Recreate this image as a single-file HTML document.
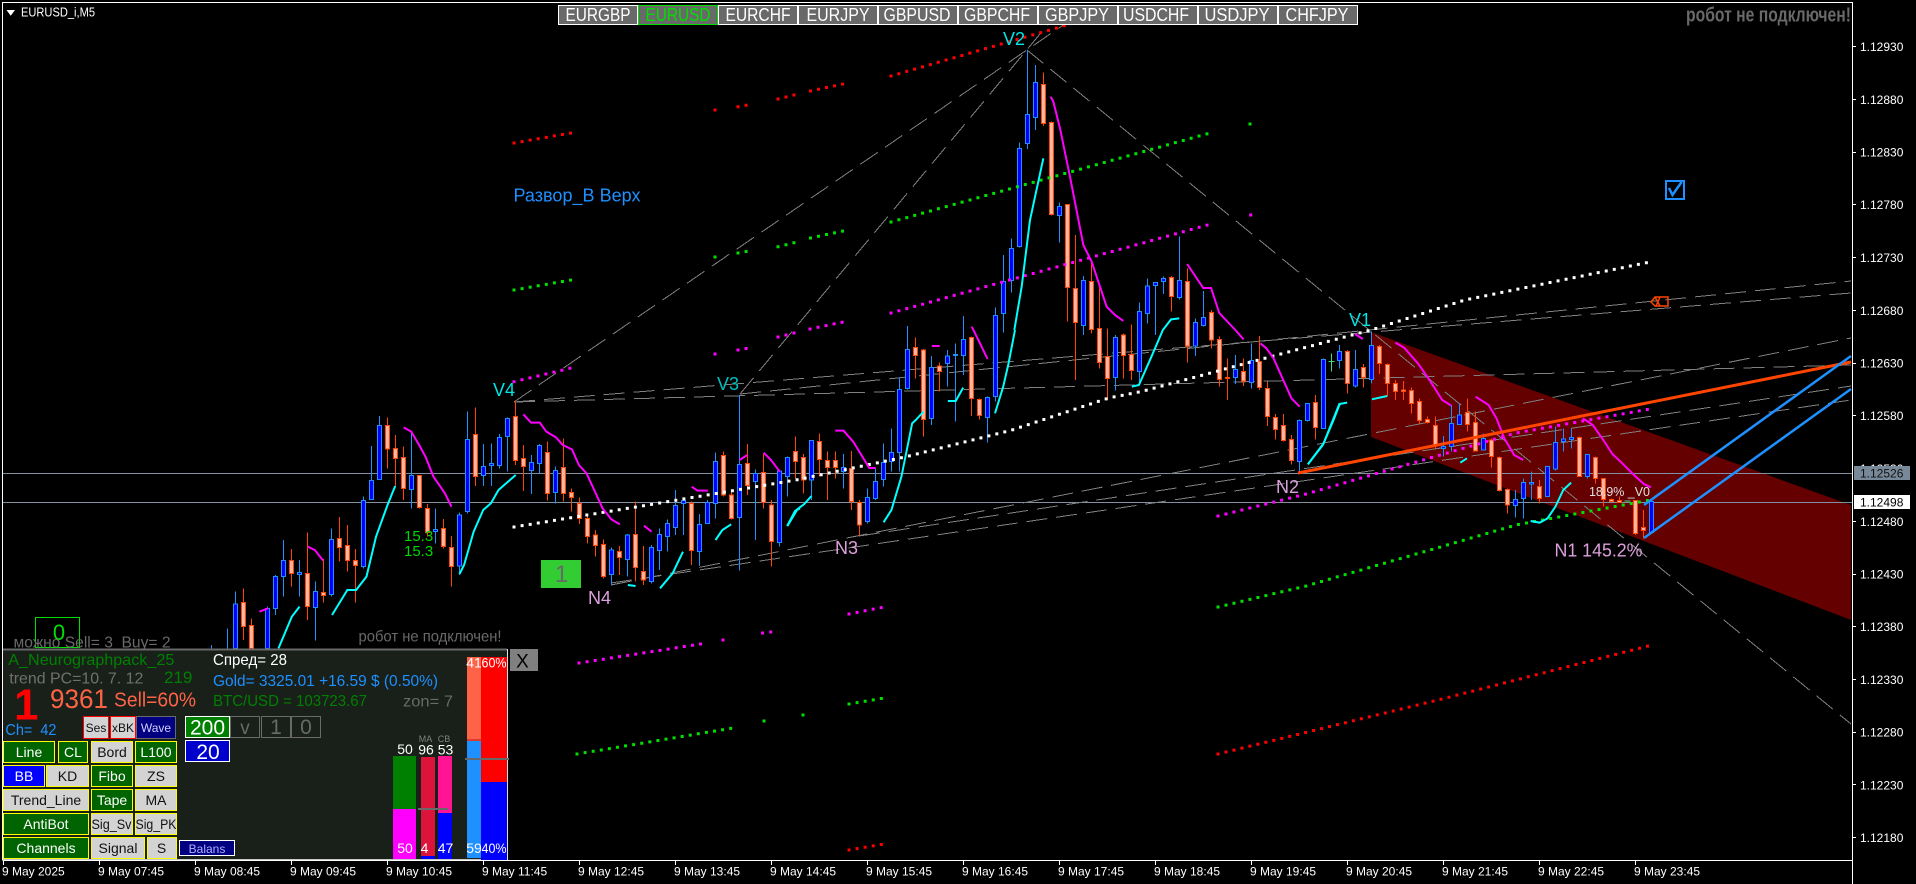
<!DOCTYPE html>
<html lang="ru"><head><meta charset="utf-8"><title>EURUSD_i,M5</title>
<style>
html,body{margin:0;padding:0;background:#000;width:1916px;height:884px;overflow:hidden}
svg{display:block;font-family:"Liberation Sans",sans-serif}
svg *{vector-effect:non-scaling-stroke}
text{white-space:pre}
.c{shape-rendering:crispEdges;stroke-width:1}
.bw{stroke:#1E90FF;fill:none}.rw{stroke:#FF4500;fill:none}
.bb{stroke:#1E90FF;fill:#0000FF}.rb{stroke:#FF4500;fill:#FFB4A2}
.g{stroke:#808080;stroke-width:1;stroke-dasharray:21 9;fill:none;shape-rendering:crispEdges}
.d{fill:none;stroke-width:3;stroke-linecap:square;stroke-dasharray:0 8.2}
.m{fill:none;stroke:#FF00FF;stroke-width:2}
.y{fill:none;stroke:#00FFFF;stroke-width:2}
.p text{font-size:12px;fill:#fff}
.t text{font-size:12px;fill:#fff}
.tb rect{stroke:#fff;fill:#696969;shape-rendering:crispEdges}
.tb text{font-size:18px;fill:#fff;text-anchor:middle}
.btn rect{stroke:#FFFF00;shape-rendering:crispEdges}
.gr{fill:#006400}.gy{fill:#D3D3D3}
.btn text{font-size:14px;text-anchor:middle}
.wt{fill:#fff}.bk{fill:#111}
.bar text{font-size:14px;fill:#fff;text-anchor:middle}
</style></head><body>
<svg width="1916" height="884" viewBox="0 0 1916 884" xmlns="http://www.w3.org/2000/svg">
<rect width="1916" height="884" fill="#000"/>

<polygon points="1371,332 1851,505 1851,620 1371,437" fill="#640000"/>

<g stroke="#8090A0" stroke-width="1" shape-rendering="crispEdges">
<line x1="3" y1="473.5" x2="1852" y2="473.5"/>
<line x1="3" y1="502.5" x2="1852" y2="502.5"/>
</g>

<g>
<path class="g" d="M514 402L1072 19"/>
<path class="g" d="M740 394L1060 10"/>
<path class="g" d="M1027 50L1851 724"/>
<path class="g" d="M514 402L1851 293"/>
<path class="g" d="M514 402L1851 365"/>
<path class="g" d="M740 394L1851 281"/>
<path class="g" d="M611 585L1851 338"/>
<path class="g" d="M859 536L1851 386"/>
<path class="g" d="M611 583L1851 400"/>
</g>

<!-- candles section A -->
<g class="c" transform="translate(.5,380) scale(1,.33333)">
<path class="bw" d="M211 795V805M227 745V805M235 635V805M267 680V805M275 585V705M283 480V650M299 540V650M315 605V782M331 445V650M363 350V565M371 198V360M379 108V300M411 155V385M435 385V490M459 398V585M467 95V400M483 192V318M491 190V318M499 162V265M507 112V275M531 225V342M539 192V282M555 260V370M611 502V615M627 462V590M651 495V610M659 445V570M667 418V515M675 330V465M683 355V465M699 402V558M707 360V430M715 218V415M739 45V572M755 268V480M779 270V500"/>
<path class="rw" d="M243 625V780M251 715V805M291 507V620M307 457V720M323 537V668M339 411V545M347 435V575M355 507V668M387 112V265M395 165V320M403 200V360M419 285V385M427 372V470M443 417V505M451 468V620M475 82V318M515 62V255M523 195V333M547 185V362M563 175V365M571 325V395M579 352V432M587 405V490M595 450V530M603 478V595M619 498V585M635 365V605M643 498V615M691 365V555M723 215V350M731 335V418M747 192V345M763 220V385M771 360V560"/>
<path class="bb" d="M233 672h4V805h-4zM265 685h4V805h-4zM273 590h4V685h-4zM281 541h4V590h-4zM297 577h4V583h-4zM313 635h4V682h-4zM329 478h4V643h-4zM361 362h4V560h-4zM369 302h4V358h-4zM377 137h4V298h-4zM409 287h4V328h-4zM433 449h4V455h-4zM457 405h4V558h-4zM465 178h4V395h-4zM481 260h4V287h-4zM489 250h4V257h-4zM497 172h4V257h-4zM505 115h4V170h-4zM529 248h4V272h-4zM537 196h4V250h-4zM553 272h4V338h-4zM609 510h4V583h-4zM625 465h4V538h-4zM649 503h4V605h-4zM657 463h4V512h-4zM665 430h4V470h-4zM673 377h4V443h-4zM681 362h4V370h-4zM697 433h4V515h-4zM705 367h4V430h-4zM713 244h4V370h-4zM737 253h4V413h-4zM753 280h4V305h-4zM777 273h4V487h-4z"/>
<path class="rb" d="M241 667h4V740h-4zM249 737h4V805h-4zM289 541h4V580h-4zM305 580h4V680h-4zM321 637h4V647h-4zM337 475h4V502h-4zM345 497h4V542h-4zM353 541h4V556h-4zM385 137h4V207h-4zM393 205h4V235h-4zM401 232h4V325h-4zM417 287h4V383h-4zM425 385h4V458h-4zM441 445h4V500h-4zM449 503h4V560h-4zM473 163h4V290h-4zM513 110h4V242h-4zM521 236h4V260h-4zM545 217h4V340h-4zM561 262h4V340h-4zM569 337h4V352h-4zM577 370h4V415h-4zM585 415h4V470h-4zM593 465h4V497h-4zM601 493h4V590h-4zM617 515h4V532h-4zM633 463h4V562h-4zM641 575h4V600h-4zM689 370h4V512h-4zM721 226h4V345h-4zM729 345h4V415h-4zM745 250h4V317h-4zM761 277h4V367h-4zM769 375h4V485h-4z"/>
</g>

<!-- candles section B -->
<g class="c" transform="translate(.5,280) scale(1,.33333)">
<path class="bw" d="M787 530V650M811 480V660M843 522V625M867 625V730M875 565V660M883 490V620M891 445V575M899 292V575M907 138V328M931 228V435M947 210V320M955 190V425M963 108V285M987 350V488M995 82V365M1003 -75V158M1011 -125V38M1019 -413V-98M1027 -690V-393M1035 -645V-450M1059 -233V-112M1083 -12V165M1115 165V332M1139 68V310M1147 -5V130M1155 7V165M1163 -10V42M1179 -130V58M1195 115V228M1203 33V140M1235 225V312M1251 190V325M1299 418V580M1307 370V425"/>
<path class="rw" d="M795 470V595M803 522V640M819 460V590M827 515V660M835 515V595M851 513V690M859 660V768M915 172V295M923 207V470M939 247V335M971 170V408M979 355V418M1043 -622V-462M1051 -475V-193M1067 -227V125M1075 -135V300M1091 -55V160M1099 15V265M1107 145V360M1123 160V295M1131 133V300M1171 -12V95M1187 -35V248M1211 90V205M1219 170V320M1227 235V360M1243 235V318M1259 168V330M1267 305V438M1275 402V478M1283 402V485M1291 465V553M1315 345V478"/>
<path class="bb" d="M785 532h4V590h-4zM809 482h4V600h-4zM841 562h4V575h-4zM865 652h4V725h-4zM873 605h4V655h-4zM881 547h4V598h-4zM889 517h4V545h-4zM897 328h4V518h-4zM905 208h4V325h-4zM929 262h4V415h-4zM945 228h4V250h-4zM953 224h4V227h-4zM961 178h4V227h-4zM985 352h4V412h-4zM993 107h4V350h-4zM1001 5h4V100h-4zM1009 -95h4V2h-4zM1017 -395h4V-100h-4zM1025 -497h4V-409h-4zM1033 -593h4V-487h-4zM1057 -221h4V-193h-4zM1081 1h4V137h-4zM1113 172h4V293h-4zM1137 95h4V275h-4zM1145 18h4V100h-4zM1153 7h4V17h-4zM1161 -5h4V5h-4zM1177 1h4V53h-4zM1193 127h4V198h-4zM1201 112h4V137h-4zM1233 268h4V293h-4zM1249 242h4V307h-4zM1297 422h4V545h-4zM1305 370h4V422h-4z"/>
<path class="rb" d="M793 515h4V545h-4zM801 532h4V600h-4zM817 484h4V538h-4zM825 541h4V562h-4zM833 541h4V562h-4zM849 565h4V665h-4zM857 667h4V735h-4zM913 202h4V227h-4zM921 210h4V418h-4zM937 258h4V275h-4zM969 172h4V355h-4zM977 358h4V406h-4zM1041 -587h4V-469h-4zM1049 -473h4V-197h-4zM1065 -227h4V23h-4zM1073 25h4V128h-4zM1089 4h4V148h-4zM1097 145h4V248h-4zM1105 230h4V295h-4zM1121 165h4V227h-4zM1129 224h4V272h-4zM1169 -8h4V50h-4zM1185 5h4V198h-4zM1209 97h4V180h-4zM1217 178h4V298h-4zM1225 292h4V296h-4zM1241 275h4V303h-4zM1257 245h4V323h-4zM1265 325h4V410h-4zM1273 412h4V448h-4zM1281 437h4V482h-4zM1289 478h4V542h-4zM1313 367h4V443h-4z"/>
</g>

<!-- candles section D -->
<g class="c" transform="translate(.5,300) scale(1,.33333)">
<path class="bw" d="M1323 175V385M1339 135V205M1355 150V262M1371 95V250M1443 408V470M1451 315V455M1459 310V375M1483 400V450M1515 570V653M1523 535V655M1531 515V600M1547 500V590M1555 380V512M1563 385V455M1571 385V445M1587 463V535M1651 600V700"/>
<path class="rw" d="M1347 150V280M1363 192V262M1379 135V222M1387 190V288M1395 240V300M1403 243V300M1411 263V340M1419 295V372M1427 350V370M1435 350V445M1467 295V395M1475 335V455M1491 415V503M1499 470V575M1507 565V640M1539 540V610M1579 410V530M1595 470V550M1603 535V620M1611 595V605M1619 590V607M1635 600V705M1643 630V715"/>
<path fill="none" stroke="#3CE07A" d="M1331 160V215M1328 185H1334M1624 603H1630"/>
<path class="bb" d="M1321 178h4V385h-4zM1337 155h4V182h-4zM1353 208h4V258h-4zM1369 137h4V238h-4zM1441 440h4V445h-4zM1449 370h4V440h-4zM1457 345h4V373h-4zM1481 415h4V450h-4zM1513 598h4V617h-4zM1521 547h4V595h-4zM1529 547h4V552h-4zM1545 500h4V590h-4zM1553 427h4V507h-4zM1561 417h4V425h-4zM1569 412h4V418h-4zM1585 463h4V530h-4zM1649 605h4V697h-4z"/>
<path class="rb" d="M1345 155h4V250h-4zM1361 202h4V232h-4zM1377 140h4V190h-4zM1385 193h4V250h-4zM1393 250h4V275h-4zM1401 270h4V275h-4zM1409 272h4V310h-4zM1417 305h4V362h-4zM1425 358h4V367h-4zM1433 377h4V435h-4zM1465 338h4V373h-4zM1473 367h4V453h-4zM1489 420h4V470h-4zM1497 472h4V572h-4zM1505 568h4V615h-4zM1537 560h4V595h-4zM1577 412h4V530h-4zM1593 472h4V535h-4zM1601 535h4V598h-4zM1609 598h4V605h-4zM1617 601h4V607h-4zM1633 602h4V700h-4zM1641 682h4V692h-4z"/>
</g>

<!-- dotted levels -->
<g stroke="#FF0000" class="d">
<path d="M514 143L571 133"/><path d="M715 110L716 110"/><path d="M738 106.7L754 103.7"/><path d="M778 99L794 95"/><path d="M810.5 91L843 84"/><path d="M891 76L1067 25"/>
<path d="M849 850L884 844"/><path d="M1218 754L1442 699L1652 645"/>
</g>
<g stroke="#00E000" class="d">
<path d="M514 290L571 280"/><path d="M715 257L716 257"/><path d="M738 253L754 250"/><path d="M778 246.7L794 242.7"/><path d="M810.5 238L843 231"/><path d="M891 222L1210 133"/><path d="M1250 124L1251 124"/>
<path d="M577 754L733 728"/><path d="M764 721L765 721"/><path d="M803 715L804 715"/><path d="M849 704L884 698"/>
<path d="M1218 607L1306 586L1516 525L1650 500"/>
</g>
<g stroke="#FF00FF" class="d">
<path d="M514 381.7L571 368"/><path d="M715 354L716 354"/><path d="M738 350L754 347"/><path d="M778 337L794 333"/><path d="M810 329L843 322"/><path d="M891 313L1211 224"/><path d="M1250.7 215L1251.7 215"/>
<path d="M579 663L707 643"/><path d="M723 640L731 639"/><path d="M762.6 633L771 632"/><path d="M849 614L884 607"/>
<path d="M1218 516L1306 494L1516 433L1650 409"/>
</g>
<path stroke="#FFFFFF" class="d" d="M514 527L636 507L796 480L905 457L1012 430L1108.6 398L1140.7 391.7L1258.6 360L1337 339L1371 330L1465 300L1650 262"/>

<!-- magenta / cyan segments -->
<g transform="translate(200,380) scale(.3827,.33333)">
<polyline class="m" points="155,695 178,685"/>
<polyline class="m" points="282,500 300,510 322,542"/>
<polyline class="m" points="532,142 552,155 575,200 590,232 610,290 622,310 640,340 657,380"/>
<polyline class="m" points="845,103 865,128 888,128 905,155 930,172 948,195 972,208 990,255 1010,280 1030,330 1052,385 1075,418 1097,433"/>
<polyline class="m" points="1160,437 1180,455"/>
<polyline class="m" points="1285,320 1300,332 1327,332"/>
<polyline class="m" points="1410,240 1430,225"/>
<polyline class="m" points="1473,218 1492,240 1515,275"/>
<polyline class="y" points="205,805 240,710 260,680"/>
<polyline class="y" points="345,705 385,630 408,630 435,590 460,470 490,375 510,318"/>
<polyline class="y" points="678,582 690,555 715,455 740,390 760,370 780,330 825,285"/>
<polyline class="y" points="1118,615 1138,618"/>
<polyline class="y" points="1202,625 1235,580 1262,515"/>
<polyline class="y" points="1347,480 1365,450 1388,433"/>
<polyline class="y" points="1535,438 1560,390 1568,385"/>
</g>
<g transform="translate(780,280) scale(.35714,.33333)">
<polyline class="m" points="155,452 178,452 205,485 242,550 250,564 268,564"/>
<polyline class="m" points="425,198 447,198"/>
<polyline class="m" points="537,140 560,190 581,237"/>
<polyline class="m" points="1140,-48 1185,24 1207,24 1230,99 1275,150 1298,178"/>
<polyline class="m" points="1345,190 1362,205 1382,235 1432,355 1455,380"/>
<polyline class="y" points="20,738 42,693 68,672 88,648"/>
<polyline class="y" points="290,727 312,690 340,590 370,430 380,420 402,395"/>
<polyline class="y" points="470,363 492,363 513,323"/>
<polyline class="y" points="602,400 625,320 640,250 658,150"/>
<polyline class="y" points="985,320 1005,315 1040,230 1072,150 1095,118 1118,115"/>
<polyline class="y" points="1478,553 1520,495 1550,420 1568,370"/>
</g>
<g transform="translate(960,30) scale(.33333,.33333)">
<polyline class="m" points="272,200 280,215 300,295 330,440 370,645 395,695 440,830 465,855 490,873"/>
<polyline class="y" points="163,900 185,770 210,570 250,385"/>
</g>
<g transform="translate(1300,300) scale(.39293,.33333)">
<polyline class="m" points="140,102 160,117"/>
<polyline class="m" points="243,128 265,143 300,190 325,232 362,300 385,317"/>
<polyline class="m" points="447,290 480,315 500,355 520,415 545,465 568,480"/>
<polyline class="m" points="720,355 745,375 772,420 795,462 820,490 850,525 875,552 893,562"/>
<polyline class="y" points="20,493 60,430 100,312 120,308"/>
<polyline class="y" points="183,298 222,288"/>
<polyline class="y" points="408,488 425,475"/>
<polyline class="y" points="587,663 610,668 630,655 650,620 670,570 690,548"/>
</g>

<!-- trend lines -->
<line x1="1298" y1="473" x2="1851" y2="362" stroke="#FF4500" stroke-width="3"/>
<line x1="1644" y1="505" x2="1851" y2="356" stroke="#1E90FF" stroke-width="2.5"/>
<line x1="1644" y1="538" x2="1851" y2="389" stroke="#1E90FF" stroke-width="2.5"/>

<!-- small objects -->
<path d="M1651 302L1655 297H1668V306H1655Z M1655 297L1660 306 M1660 297L1656 306" fill="none" stroke="#FF4500" stroke-width="1.5"/>
<rect x="1666" y="181" width="18" height="18" fill="none" stroke="#1E90FF" stroke-width="2"/>
<path d="M1669 188L1672.5 195L1681.6 182" fill="none" stroke="#1E90FF" stroke-width="2.5"/>
<rect x="541" y="560" width="40" height="28" fill="#32CD32"/>
<text x="561.5" y="582" font-size="24" fill="#696969" text-anchor="middle">1</text>

<!-- chart labels -->
<g font-size="18" fill="#00E5E5">
<text x="1003" y="45">V2</text><text x="1349" y="326">V1</text><text x="493" y="396">V4</text><text x="717" y="390" fill="#00BFC0">V3</text>
</g>
<g font-size="18" fill="#DDA0DD">
<text x="588" y="604">N4</text><text x="835" y="554">N3</text><text x="1276" y="493">N2</text><text x="1554.5" y="556.5" textLength="88" lengthAdjust="spacingAndGlyphs">N1 145.2%</text>
</g>
<text x="1589" y="496" font-size="13" fill="#E0E0E0" textLength="61" lengthAdjust="spacingAndGlyphs">18.9% _V0</text>
<text x="404" y="541" font-size="15" fill="#00D800">15.3</text>
<text x="404" y="556" font-size="15" fill="#00D800">15.3</text>
<text x="513.5" y="201.7" font-size="18" fill="#1E90FF" textLength="127" lengthAdjust="spacingAndGlyphs">Развор_В Верх</text>

<rect x="35.5" y="617.5" width="44" height="30" fill="none" stroke="#00E000" shape-rendering="crispEdges"/>
<text x="59" y="640" font-size="22" fill="#00E000" text-anchor="middle">0</text>
<text x="13.5" y="647.5" font-size="16" fill="#696969" textLength="157" lengthAdjust="spacingAndGlyphs">можно Sell= 3  Buy= 2</text>
<text x="358.5" y="641.5" font-size="16" fill="#696969" textLength="143" lengthAdjust="spacingAndGlyphs">робот не подключен!</text>

<!-- top strip -->
<text x="1686" y="21.5" font-size="20" font-weight="bold" fill="#696969" textLength="165" lengthAdjust="spacingAndGlyphs">робот не подключен!</text>
<path d="M6.5 10H15L10.7 15.7Z" fill="#fff"/>
<text x="21" y="16.7" font-size="13" fill="#fff" textLength="74" lengthAdjust="spacingAndGlyphs">EURUSD_i,M5</text>
<g class="tb">
<rect x="558.5" y="5.5" width="79" height="19"/><text x="598" y="21" textLength="65" lengthAdjust="spacingAndGlyphs">EURGBP</text>
<rect x="638.5" y="5.5" width="79" height="19" style="stroke:#00E000"/><text x="678" y="21" textLength="65" lengthAdjust="spacingAndGlyphs" style="fill:#00E000">EURUSD</text>
<rect x="718.5" y="5.5" width="79" height="19"/><text x="758" y="21" textLength="65" lengthAdjust="spacingAndGlyphs">EURCHF</text>
<rect x="798.5" y="5.5" width="79" height="19"/><text x="838" y="21" textLength="63" lengthAdjust="spacingAndGlyphs">EURJPY</text>
<rect x="878.5" y="5.5" width="79" height="19"/><text x="917" y="21" textLength="67" lengthAdjust="spacingAndGlyphs">GBPUSD</text>
<rect x="958.5" y="5.5" width="79" height="19"/><text x="997" y="21" textLength="66" lengthAdjust="spacingAndGlyphs">GBPCHF</text>
<rect x="1038.5" y="5.5" width="79" height="19"/><text x="1077" y="21" textLength="64" lengthAdjust="spacingAndGlyphs">GBPJPY</text>
<rect x="1118.5" y="5.5" width="79" height="19"/><text x="1156" y="21" textLength="66" lengthAdjust="spacingAndGlyphs">USDCHF</text>
<rect x="1198.5" y="5.5" width="79" height="19"/><text x="1237" y="21" textLength="65" lengthAdjust="spacingAndGlyphs">USDJPY</text>
<rect x="1278.5" y="5.5" width="79" height="19"/><text x="1317" y="21" textLength="63" lengthAdjust="spacingAndGlyphs">CHFJPY</text>
</g>

<!-- frame -->
<g stroke="#fff" shape-rendering="crispEdges" fill="none">
<path d="M2.5 860V2.5H1852.5V884"/>
<path d="M2.5 860.5H1852.5"/>
<path d="M3.5 861V865M99.5 861V865M195.5 861V865M291.5 861V865M387.5 861V865M483.5 861V865M579.5 861V865M675.5 861V865M771.5 861V865M867.5 861V865M963.5 861V865M1059.5 861V865M1155.5 861V865M1251.5 861V865M1347.5 861V865M1443.5 861V865M1539.5 861V865M1635.5 861V865"/>
<path d="M1853 46.5h3M1853 99.5h3M1853 152.5h3M1853 204.5h3M1853 257.5h3M1853 310.5h3M1853 363.5h3M1853 415.5h3M1853 521.5h3M1853 574.5h3M1853 626.5h3M1853 679.5h3M1853 732.5h3M1853 784.5h3M1853 837.5h3"/>
</g>

<!-- price axis -->
<g class="p">
<text x="1860" y="51">1.12930</text><text x="1860" y="104">1.12880</text><text x="1860" y="156.500">1.12830</text><text x="1860" y="209">1.12780</text><text x="1860" y="262">1.12730</text><text x="1860" y="315">1.12680</text><text x="1860" y="367.500">1.12630</text><text x="1860" y="420">1.12580</text><text x="1860" y="473">1.12530</text><text x="1860" y="526">1.12480</text><text x="1860" y="578.500">1.12430</text><text x="1860" y="631">1.12380</text><text x="1860" y="684">1.12330</text><text x="1860" y="736.500">1.12280</text><text x="1860" y="789.500">1.12230</text><text x="1860" y="842">1.12180</text>
</g>
<rect x="1854" y="466" width="56" height="14" fill="#778899"/>
<text x="1860" y="477.500" font-size="12" fill="#111">1.12526</text>
<rect x="1854" y="495" width="56" height="14" fill="#fff"/>
<text x="1860" y="506.500" font-size="12" fill="#000">1.12498</text>

<!-- time axis -->
<g class="t">
<text x="2" y="875.500">9 May 2025</text><text x="98" y="875.500">9 May 07:45</text><text x="194" y="875.500">9 May 08:45</text><text x="290" y="875.500">9 May 09:45</text><text x="386" y="875.500">9 May 10:45</text><text x="482" y="875.500">9 May 11:45</text><text x="578" y="875.500">9 May 12:45</text><text x="674" y="875.500">9 May 13:45</text><text x="770" y="875.500">9 May 14:45</text><text x="866" y="875.500">9 May 15:45</text><text x="962" y="875.500">9 May 16:45</text><text x="1058" y="875.500">9 May 17:45</text><text x="1154" y="875.500">9 May 18:45</text><text x="1250" y="875.500">9 May 19:45</text><text x="1346" y="875.500">9 May 20:45</text><text x="1442" y="875.500">9 May 21:45</text><text x="1538" y="875.500">9 May 22:45</text><text x="1634" y="875.500">9 May 23:45</text>
</g>

<!-- panel -->
<rect x="3" y="649" width="504" height="210" fill="#182019"/>
<g shape-rendering="crispEdges">
<path d="M3 649.500H507" stroke="#696969" stroke-width="2"/>
<path d="M507.500 649V860" stroke="#E0E0E0"/>
<path d="M3 859.500H507" stroke="#C8C8C8"/>
<rect x="510" y="649" width="28" height="22" fill="#808080"/>
</g>
<text x="522.500" y="667.700" font-size="19" fill="#000" text-anchor="middle">X</text>

<text x="8.300" y="665" font-size="16" fill="#008000" textLength="166" lengthAdjust="spacingAndGlyphs">A_Neurographpack_25</text>
<text x="9.300" y="683.300" font-size="16" fill="#707070" textLength="134" lengthAdjust="spacingAndGlyphs">trend PC=10. 7. 12</text>
<text x="164" y="683" font-size="17" fill="#008000">219</text>
<text x="14" y="719.300" font-size="44" font-weight="bold" fill="#FF0000">1</text>
<text x="50" y="708" font-size="27" fill="#FF6347" textLength="58" lengthAdjust="spacingAndGlyphs">9361</text>
<text x="114" y="706.700" font-size="20" fill="#FF6347" textLength="82" lengthAdjust="spacingAndGlyphs">Sell=60%</text>
<text x="213" y="665" font-size="16" fill="#fff" textLength="74" lengthAdjust="spacingAndGlyphs">Спред= 28</text>
<text x="213" y="686" font-size="16" fill="#1E90FF" textLength="225" lengthAdjust="spacingAndGlyphs">Gold= 3325.01 +16.59 $ (0.50%)</text>
<text x="213" y="706" font-size="16" fill="#008000" textLength="154" lengthAdjust="spacingAndGlyphs">BTC/USD = 103723.67</text>
<text x="403" y="706.700" font-size="16" fill="#696969" textLength="50" lengthAdjust="spacingAndGlyphs">zon= 7</text>
<text x="5.400" y="735" font-size="16" fill="#1E90FF" textLength="51" lengthAdjust="spacingAndGlyphs">Ch=  42</text>

<g class="btn">
<rect x="83.500" y="716.500" width="25" height="22" class="gy" style="stroke:#FF0000"/><text x="96" y="732" font-size="12" class="bk" style="font-size:12px">Ses</text>
<rect x="110.500" y="716.500" width="25" height="22" class="gy" style="stroke:#FF0000"/><text x="123" y="732" class="bk" style="font-size:12px">xBK</text>
<rect x="136.500" y="716.500" width="39" height="22" fill="#000080" style="stroke:#696969"/><text x="156" y="732" style="font-size:12px;fill:#D0D0FF">Wave</text>

<rect x="3.500" y="741.500" width="51" height="21" class="gr"/><text x="29" y="757" class="wt">Line</text>
<rect x="58.500" y="741.500" width="29" height="21" class="gr"/><text x="73" y="757" class="wt">CL</text>
<rect x="91.500" y="741.500" width="41" height="21" class="gy"/><text x="112" y="757" class="bk">Bord</text>
<rect x="135.500" y="741.500" width="41" height="21" class="gr"/><text x="156" y="757" class="wt">L100</text>

<rect x="3.500" y="765.500" width="41" height="21" fill="#0000FF"/><text x="24" y="781" class="wt">BB</text>
<rect x="46.500" y="765.500" width="42" height="21" class="gy"/><text x="67.500" y="781" class="bk">KD</text>
<rect x="91.500" y="765.500" width="41" height="21" class="gr"/><text x="112" y="781" class="wt">Fibo</text>
<rect x="135.500" y="765.500" width="41" height="21" class="gy"/><text x="156" y="781" class="bk">ZS</text>

<rect x="3.500" y="789.500" width="85" height="21" class="gy"/><text x="46" y="805" class="bk">Trend_Line</text>
<rect x="91.500" y="789.500" width="41" height="21" class="gr"/><text x="112" y="805" class="wt">Tape</text>
<rect x="135.500" y="789.500" width="41" height="21" class="gy"/><text x="156" y="805" class="bk">MA</text>

<rect x="3.500" y="813.500" width="85" height="21" class="gr"/><text x="46" y="829" class="wt">AntiBot</text>
<rect x="91.500" y="813.500" width="41" height="21" class="gy"/><text x="111.500" y="829" class="bk" textLength="40" lengthAdjust="spacingAndGlyphs">Sig_Sv</text>
<rect x="135.500" y="813.500" width="41" height="21" class="gy"/><text x="156" y="829" class="bk" textLength="41" lengthAdjust="spacingAndGlyphs">Sig_PK</text>

<rect x="3.500" y="837.500" width="85" height="21" class="gr"/><text x="46" y="853" class="wt">Channels</text>
<rect x="91.500" y="837.500" width="53" height="21" class="gy"/><text x="118" y="853" class="bk">Signal</text>
<rect x="147.500" y="837.500" width="29" height="21" class="gy"/><text x="161.500" y="853" class="bk">S</text>
<rect x="179.500" y="840.500" width="55" height="15" fill="#000080" style="stroke:#fff"/><text x="207" y="853" style="font-size:12px;fill:#B0B0FF">Balans</text>
</g>

<g shape-rendering="crispEdges">
<rect x="185.500" y="716.500" width="44" height="21" fill="#008000" stroke="#fff"/>
<rect x="230.500" y="716.500" width="29" height="21" fill="none" stroke="#696969"/>
<rect x="261.500" y="716.500" width="29" height="21" fill="none" stroke="#696969"/>
<rect x="291.500" y="716.500" width="29" height="21" fill="none" stroke="#696969"/>
<rect x="185.500" y="740.500" width="44" height="21" fill="#0000CD" stroke="#fff"/>
</g>
<g text-anchor="middle" font-size="21">
<text x="207.500" y="734.500" fill="#fff">200</text>
<text x="245" y="734" fill="#696969" font-size="19">v</text>
<text x="276" y="734" fill="#696969">1</text>
<text x="306" y="734" fill="#696969">0</text>
<text x="208" y="759" fill="#fff">20</text>
</g>

<!-- bars -->
<g shape-rendering="crispEdges">
<rect x="393" y="756" width="23" height="53" fill="#008000"/>
<rect x="393" y="809" width="23" height="50" fill="#FF00FF"/>
<rect x="421" y="757" width="14" height="99" fill="#DC143C"/>
<rect x="421" y="856" width="14" height="3" fill="#0000FF"/>
<rect x="438" y="756" width="14" height="57" fill="#FF1493"/>
<rect x="438" y="813" width="14" height="46" fill="#0000FF"/>
<rect x="418" y="808" width="30" height="2" fill="#696969"/>
<rect x="467" y="657" width="14" height="83" fill="#FF6347"/>
<rect x="467" y="739" width="14" height="2" fill="#DC3C2C"/>
<rect x="467" y="741" width="14" height="117" fill="#1E90FF"/>
<rect x="481" y="657" width="26" height="125" fill="#FF0000"/>
<rect x="481" y="782" width="26" height="78" fill="#0000FF"/>
<rect x="465" y="758" width="44" height="2" fill="#696969"/>
</g>
<g class="bar">
<text x="405" y="754">50</text><text x="426" y="754.500">96</text><text x="445.500" y="754.500">53</text>
<text x="405" y="853">50</text><text x="424.500" y="853">4</text><text x="445.500" y="853">47</text>
<text x="474" y="667.500">41</text><text x="494" y="667.500" textLength="25" lengthAdjust="spacingAndGlyphs">60%</text>
<text x="474" y="853">59</text><text x="494" y="853" textLength="25" lengthAdjust="spacingAndGlyphs">40%</text>
</g>
<g font-size="9" fill="#808080" text-anchor="middle">
<text x="425.500" y="742">MA</text><text x="444" y="742">CB</text>
</g>
</svg>
</body></html>
